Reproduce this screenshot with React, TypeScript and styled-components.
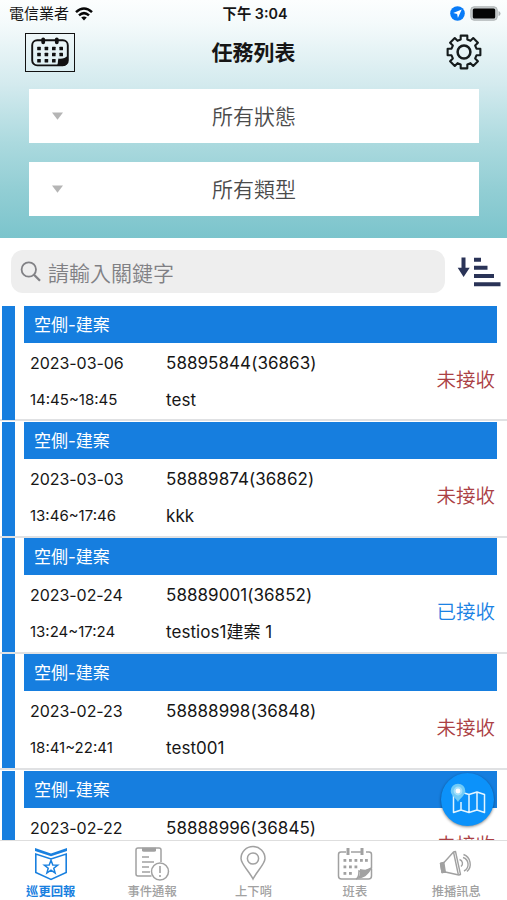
import React from 'react';
import styled, { createGlobalStyle } from 'styled-components';

const GlobalStyle = createGlobalStyle`
  * { box-sizing: border-box; }
  body {
    margin: 0;
    background: #fff;
    font-family: Inter, "Noto Sans CJK TC", sans-serif;
    color: #161616;
  }
  svg { display: block; flex: none; }
`;

const Screen = styled.div`
  position: relative;
  display: flex;
  flex-direction: column;
  width: 507px;
  height: 900px;
  overflow: hidden;
  background: #fff;
`;

const Header = styled.header`
  height: 238px;
  flex: none;
  background: linear-gradient(#fcfefe 0px, #f4fafb 24px, #d3eaee 85px, #aad9de 145px, #92ced4 190px, #7bc4cc 238px);
`;

const StatusBar = styled.div`
  display: grid;
  grid-template-columns: 1fr auto 1fr;
  align-items: center;
  height: 27px;
  padding: 0 6px 0 9px;
  font-size: 15px;
  line-height: 27px;
`;

const Carrier = styled.div`
  display: flex;
  align-items: center;
  gap: 6px;
`;

const Clock = styled.div`
  font-weight: 600;
  font-size: 14.3px;
`;

const Indicators = styled.div`
  display: flex;
  justify-content: flex-end;
  align-items: center;
  gap: 5px;
`;

const NavBar = styled.div`
  display: grid;
  grid-template-columns: 1fr auto 1fr;
  align-items: center;
  height: 50px;
  padding: 0 25px;
`;

const CalendarButton = styled.button`
  display: flex;
  align-items: center;
  justify-content: center;
  width: 50px;
  height: 39px;
  padding: 0;
  border: 1px solid #111;
  background: transparent;
`;

const Title = styled.h1`
  margin: 0;
  padding-top: 1px;
  font-size: 21px;
  font-weight: 600;
  line-height: 49px;
`;

const SettingsButton = styled.button`
  justify-self: end;
  padding: 0;
  border: 0;
  background: transparent;
`;

const Filters = styled.div`
  display: flex;
  flex-direction: column;
  gap: 19px;
  padding: 12px 28px 0 29px;
`;

const Select = styled.div`
  display: grid;
  grid-template-columns: 56px 1fr 56px;
  align-items: center;
  justify-items: center;
  height: 54px;
  background: #fff;
  color: #4b4b4b;
  font-size: 21px;
  font-weight: 350;
`;

const SelectLabel = styled.span`
  padding-bottom: 2px;
`;

const SearchRow = styled.div`
  display: flex;
  align-items: center;
  height: 67.4px;
  flex: none;
  padding: 0 6px 0 11px;
  gap: 12px;
`;

const SearchField = styled.div`
  display: flex;
  align-items: center;
  gap: 7px;
  width: 434px;
  height: 43px;
  padding-left: 9px;
  border-radius: 12px;
  background: #eee;
  color: #808084;
  font-size: 21px;
  font-weight: 350;
`;

const List = styled.main`
  flex: 1;
  min-height: 0;
  overflow: hidden;
`;

const Task = styled.article`
  display: grid;
  grid-template-columns: 13px 1fr;
  column-gap: 9px;
  height: 116.1px;
  padding: 0.8px 10px 0 2px;
  border-bottom: 2px solid #e0e1e3;
`;

const Stripe = styled.div`
  background: #167edf;
`;

const TaskContent = styled.div`
  padding-bottom: 1px;
`;

const TaskHeading = styled.h2`
  height: 37px;
  margin: 0;
  padding-left: 10px;
  background: #167edf;
  color: #fff;
  font-size: 17px;
  font-weight: 400;
  line-height: 38.4px;
`;

const TaskBody = styled.div`
  display: grid;
  grid-template-columns: 142px 1fr auto;
  height: 76px;
  padding: 2px 2px 0 0;
`;

const Column = styled.div<{ $inset?: boolean }>`
  display: grid;
  grid-template-rows: 36px 37px;
  align-items: center;
  padding-left: ${({ $inset }) => ($inset ? '6px' : '0')};
`;

const DateText = styled.div`
  font-size: 16px;
  letter-spacing: -0.05px;
  white-space: nowrap;
`;

const TimeText = styled.div`
  font-size: 15px;
  white-space: nowrap;
`;

const Detail = styled.div`
  font-size: 17px;
  letter-spacing: 0.05px;
  line-height: 22px;
  white-space: nowrap;
`;

const Status = styled.div<{ $received: boolean }>`
  padding-top: 19px;
  color: ${({ $received }) => ($received ? '#1b82e4' : '#ab4044')};
  font-size: 19.5px;
  font-weight: 350;
  line-height: 32px;
`;

const MapButton = styled.button`
  position: absolute;
  left: 441px;
  top: 773px;
  display: flex;
  align-items: center;
  justify-content: center;
  width: 53px;
  height: 53px;
  padding: 0;
  border: 0;
  border-radius: 50%;
  background: #0c92fa;
  box-shadow: 0 1px 3px #0007;
`;

const TabBar = styled.nav`
  display: grid;
  grid-template-columns: repeat(5, 1fr);
  height: 60px;
  flex: none;
  border-top: 1px solid #dedede;
  background: #fff;
`;

const Tab = styled.div<{ $active?: boolean }>`
  display: flex;
  flex-direction: column;
  align-items: center;
  padding-top: 4px;
  color: ${({ $active }) => ($active ? '#1980df' : '#a1a1a1')};
  font-size: 12.3px;
  font-weight: ${({ $active }) => ($active ? 700 : 500)};
  line-height: 20px;
`;

const WifiIcon = () => (
  <svg width="18" height="14" viewBox="0 0 18 14" fill="none" stroke="#080808" strokeWidth="2.5">
    <path d="M1 5.2Q9-2.2 17 5.2M4 8.4q5-4.5 10 0" />
    <path d="M6.2 10.5Q9 8.4 11.8 10.5L9 13.5z" fill="#080808" stroke="none" />
  </svg>
);

const LocationIcon = () => (
  <svg width="15" height="15" viewBox="0 0 15 15">
    <circle cx="7.5" cy="7.5" r="7.3" fill="#087bf7" />
    <path d="M11.7 3.4 3.2 7.1l3.9.9.8 4z" fill="#fff" />
  </svg>
);

const BatteryIcon = () => (
  <svg width="31" height="15" viewBox="0 0 31 15">
    <rect x=".8" y=".8" width="26.4" height="13.4" rx="3.2" fill="#c8cdce" stroke="#aeb3b4" />
    <rect x="2.8" y="2.6" width="22.4" height="9.8" rx="1.5" fill="#050505" />
    <path d="M28.5 5q2 .5 2 2.5t-2 2.5z" fill="#adb2b3" />
  </svg>
);

const dots = (xs: number[], ys: number[]) => ys.flatMap((y) => xs.map((x) => ({ x, y })));

const CalendarIcon = () => (
  <svg width="40" height="32" viewBox="0 0 40 32">
    <rect x="2.2" y="4.2" width="35.6" height="25.2" rx="5" fill="none" stroke="#111" strokeWidth="1.9" />
    <path d="M13.2 3.3v3M26.8 3.3v3" stroke="#111" strokeWidth="3.8" strokeLinecap="round" />
    {dots([7.2, 14.6, 22, 29.4], [10.7, 16.7, 22.9]).map(({ x, y }) => (
      <rect key={`${x}-${y}`} x={x} y={y} width="3.6" height="3.6" rx=".5" fill="#111" />
    ))}
    <path d="M26.5 30c2-2 1-5 2-7.5 3 1 7-.5 9-2.5v5q0 5-5 5z" fill="#111" />
  </svg>
);

const gearPath = (() => {
  const points: string[] = [];
  for (let i = 0; i < 8; i += 1) {
    const base = (i * Math.PI) / 4;
    [[-0.26, 12.9], [-0.2, 16.7], [0.2, 16.7], [0.26, 12.9]].forEach(([offset, radius]) => {
      const angle = base + offset;
      points.push(`${(18 + radius * Math.cos(angle)).toFixed(2)} ${(18 + radius * Math.sin(angle)).toFixed(2)}`);
    });
  }
  return `M${points.join('L')}Z`;
})();

const GearIcon = () => (
  <svg width="36" height="36" viewBox="0 0 36 36" fill="none" stroke="#151b1c" strokeWidth="2.1" strokeLinejoin="round">
    <path d={gearPath} />
    <circle cx="18" cy="18" r="6.4" strokeWidth="2.5" />
  </svg>
);

const ArrowIcon = () => (
  <svg width="11" height="8" viewBox="0 0 11 8">
    <path d="M0 .6h11L5.5 7.8z" fill="#b5b5b5" />
  </svg>
);

const SearchIcon = () => (
  <svg width="21" height="21" viewBox="0 0 21 21" fill="none" stroke="#818185" strokeWidth="1.8">
    <circle cx="8.8" cy="8.5" r="7.2" />
    <path d="m14 13.7 6 6" strokeWidth="2.3" />
  </svg>
);

const SortIcon = () => (
  <svg width="44" height="30" viewBox="0 0 44 30" fill="#2a3357">
    <path d="M4.5 .5h4v10.2h4.2L6.6 20 .7 10.7h3.8z" />
    <path d="M17 .8h7v4h-7zM17 8.8h13.5v4H17zM17 17h20v4H17zM17 25.2h26.5v4H17z" />
  </svg>
);

const MapIcon = () => (
  <svg width="36" height="34" viewBox="0 0 36 34">
    <path d="M3.5 11.5v18L11 27l8 2.5 8-2.5 7.5 2.5v-18L27 9l-8 2.5-5-1.5M11 19v8m8-15.5v18M27 9v18" fill="none" stroke="#e4f5ff" strokeWidth="1.5" strokeLinejoin="round" />
    <path d="M8 19C6 15.500.7 12 .7 8a7.3 7.3 0 0 1 14.6 0c0 4-5.3 7.5-7.3 11z" fill="#70cbf7" />
    <circle cx="8" cy="8" r="4.4" fill="#a3dffb" />
    <circle cx="8" cy="8" r="2.4" fill="#fff" />
  </svg>
);

const BadgeIcon = () => (
  <svg width="36" height="37" viewBox="0 0 36 37" fill="none" stroke="currentColor" strokeWidth="1.6">
    <path d="M2 3v3.1l16 5.2 16-5.2V3L18 8.4z" fill="currentColor" stroke="none" />
    <path d="M2.8 9v18.6L18 34.4l15.2-6.8V9L18 14z" />
    <path d="m18 15.3 1.8 4.6 4.9.2-3.9 3.1 1.3 4.8-4.1-2.8-4.1 2.8 1.3-4.8-3.9-3.1 4.9-.2z" strokeWidth="1.5" />
  </svg>
);

const ReportIcon = () => (
  <svg width="36" height="37" viewBox="0 0 36 37" fill="none" stroke="currentColor" strokeWidth="1.5">
    <path d="M17.5 31H4q-2 0-2-2V5q0-2 2-2h21q2 0 2 2v12" />
    <path d="M8 2.7h14v2.5q0 1.5-2 1.5H10q-2 0-2-1.5z" fill="currentColor" stroke="none" />
    <path d="M8 12h7m-7 5h12M8 22h7m-7 5h8" />
    <circle cx="26" cy="26.5" r="8.5" fill="#fff" />
    <path d="M26 21v7m0 2v2" strokeWidth="1.6" />
  </svg>
);

const PinIcon = () => (
  <svg width="36" height="37" viewBox="0 0 36 37" fill="none" stroke="currentColor" strokeWidth="1.5">
    <path d="M18 34C14 26 6 19 6 13.5a12 12 0 0 1 24 0C30 19 22 26 18 34z" />
    <circle cx="18" cy="13.5" r="5.6" />
  </svg>
);

const ScheduleIcon = () => (
  <svg width="36" height="37" viewBox="0 0 36 37" fill="none" stroke="currentColor" strokeWidth="1.5">
    <path d="M9 7H4Q1.5 7 1.5 9.5V31q0 3 3 3H19q3-1 3-8 6 1 12.5-3V9.5Q34.5 7 32 7h-3M14 7h10" />
    <path d="M11 3v7m14-7v7" strokeWidth="3" />
    {[...dots([6.5, 12, 17.5, 23, 28], [14]), ...dots([6.5, 12, 17.5], [20.5]), ...dots([6.5, 12], [27])].map(({ x, y }) => (
      <rect key={`${x}-${y}`} x={x} y={y} width="2.8" height="2.8" fill="currentColor" stroke="none" />
    ))}
    <path d="M18 34c5-1 5-5 5-10 5 1 8 1 12-1-4 7-8 11-17 11z" fill="currentColor" stroke="none" />
    <path d="M34.5 24v7q0 3-3 3H19" />
  </svg>
);

const SpeakerIcon = () => (
  <svg width="36" height="37" viewBox="0 0 36 37" fill="none" stroke="currentColor" strokeWidth="1.4" strokeLinejoin="round">
    <path d="M2.5 18.5 6 17.5 15.5 7l2-.5 5 23-1.7.5-13.500-3-3.300.5z" />
    <path d="m2.5 18.5 3.3-1 1.5 9.5-3.300.5z" fill="currentColor" />
    <path d="m15.5 7 4.8 22.5M21.5 14.5a4 4 0 0 1 1.5 7M25 12.5a7.3 7.3 0 0 1 1 13.5M25.5 9.5a10.2 10.2 0 0 1 3.5 17" />
  </svg>
);

const filters = ['所有狀態', '所有類型'];

const tasks = [
  { date: '2023-03-06', time: '14:45~18:45', code: '58895844(36863)', name: 'test', received: false },
  { date: '2023-03-03', time: '13:46~17:46', code: '58889874(36862)', name: 'kkk', received: false },
  { date: '2023-02-24', time: '13:24~17:24', code: '58889001(36852)', name: 'testios1建案 1', received: true },
  { date: '2023-02-23', time: '18:41~22:41', code: '58888998(36848)', name: 'test001', received: false },
  { date: '2023-02-22', time: '', code: '58888996(36845)', name: '', received: false },
];

const tabs = [
  { label: '巡更回報', Icon: BadgeIcon },
  { label: '事件通報', Icon: ReportIcon },
  { label: '上下哨', Icon: PinIcon },
  { label: '班表', Icon: ScheduleIcon },
  { label: '推播訊息', Icon: SpeakerIcon },
];

export default function App() {
  return (
    <Screen>
      <GlobalStyle />
      <Header>
        <StatusBar>
          <Carrier>電信業者<WifiIcon /></Carrier>
          <Clock>下午 3:04</Clock>
          <Indicators><LocationIcon /><BatteryIcon /></Indicators>
        </StatusBar>
        <NavBar>
          <CalendarButton><CalendarIcon /></CalendarButton>
          <Title>任務列表</Title>
          <SettingsButton><GearIcon /></SettingsButton>
        </NavBar>
        <Filters>
          {filters.map((label) => (
            <Select key={label}><ArrowIcon /><SelectLabel>{label}</SelectLabel></Select>
          ))}
        </Filters>
      </Header>
      <SearchRow>
        <SearchField><SearchIcon />請輸入關鍵字</SearchField>
        <SortIcon />
      </SearchRow>
      <List>
        {tasks.map((task) => (
          <Task key={task.code}>
            <Stripe />
            <TaskContent>
              <TaskHeading>空側-建案</TaskHeading>
              <TaskBody>
                <Column $inset>
                  <DateText>{task.date}</DateText>
                  <TimeText>{task.time}</TimeText>
                </Column>
                <Column>
                  <Detail>{task.code}</Detail>
                  <Detail>{task.name}</Detail>
                </Column>
                <Status $received={task.received}>{task.received ? '已接收' : '未接收'}</Status>
              </TaskBody>
            </TaskContent>
          </Task>
        ))}
      </List>
      <TabBar>
        {tabs.map(({ label, Icon }, index) => (
          <Tab key={label} $active={index === 0}><Icon />{label}</Tab>
        ))}
      </TabBar>
      <MapButton><MapIcon /></MapButton>
    </Screen>
  );
}
